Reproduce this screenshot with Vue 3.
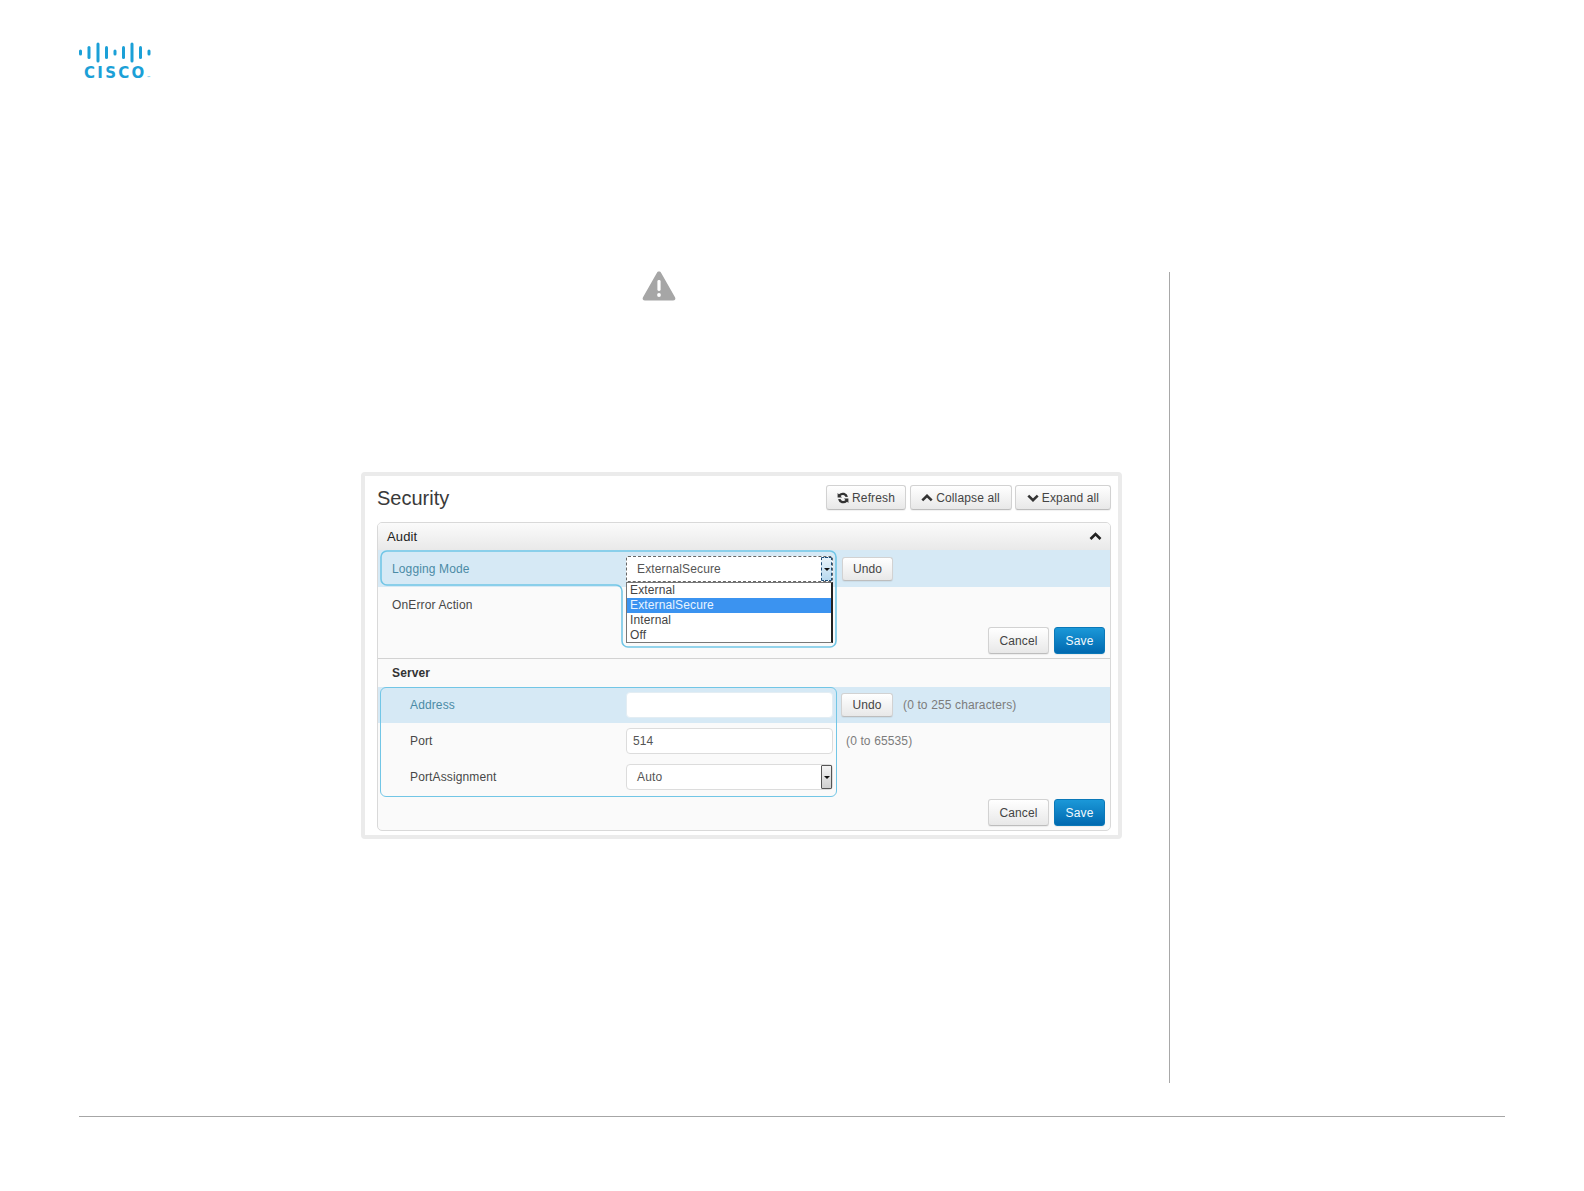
<script setup>
const bars = [
  { x: 1.5, h: 6 }, { x: 10, h: 13 }, { x: 19, h: 20 }, { x: 27.5, h: 13 }, { x: 36, h: 6 },
  { x: 44.5, h: 13 }, { x: 53, h: 20 }, { x: 61.5, h: 13 }, { x: 70, h: 6 }
]
const options = ['External', 'ExternalSecure', 'Internal', 'Off']
</script>

<template>
  <div class="page">
    <header class="brand">
      <svg class="bars" width="72" height="22" viewBox="0 0 72 22">
        <rect v-for="b in bars" :key="b.x" :x="b.x - 1.5" :y="10.5 - b.h / 2" width="3" :height="b.h" rx="1.5" fill="#1ba0d7" />
      </svg>
      <div class="wordmark">CISCO<span class="tm">™</span></div>
    </header>

    <main class="main">
      <section class="content">
        <div class="warning">
          <svg width="34" height="31" viewBox="0 0 34 31">
            <path d="M17 1.5 C18 1.5 18.7 2 19.2 2.9 L33 27.3 C34 29 33 30.5 31 30.5 L3 30.5 C1 30.5 0 29 1 27.3 L14.8 2.9 C15.3 2 16 1.5 17 1.5 Z" fill="#a6a6a6" />
            <rect x="15.4" y="10" width="3.2" height="11" rx="1.4" fill="#fff" />
            <circle cx="17" cy="25" r="1.9" fill="#fff" />
          </svg>
        </div>

        <div class="panel">
          <div class="title-row">
            <h1>Security</h1>
            <div class="toolbar">
              <button class="btn tool refresh">
                <svg width="12" height="12" viewBox="0 0 12 12">
                  <path d="M11 4.8A5.4 5.4 0 0 0 1.9 2.3L.6 1V5.4H5L3.6 4A3 3 0 0 1 8.6 5Z" fill="#333" />
                  <path d="M11 4.8A5.4 5.4 0 0 0 1.9 2.3L.6 1V5.4H5L3.6 4A3 3 0 0 1 8.6 5Z" fill="#333" transform="rotate(180 6 6)" />
                </svg>
                Refresh
              </button>
              <button class="btn tool collapse">
                <svg width="12" height="8" viewBox="0 0 12 8"><path d="M1.3 6.4 6 1.8l4.7 4.6" fill="none" stroke="#333" stroke-width="2.6" /></svg>
                Collapse all
              </button>
              <button class="btn tool expand">
                <svg width="12" height="8" viewBox="0 0 12 8"><path d="M1.3 1.6 6 6.2l4.7-4.6" fill="none" stroke="#333" stroke-width="2.6" /></svg>
                Expand all
              </button>
            </div>
          </div>

          <div class="accordion">
            <div class="acc-head">
              <span>Audit</span>
              <svg width="13" height="9" viewBox="0 0 13 9"><path d="M1.5 7 6.5 2l5 5" fill="none" stroke="#222" stroke-width="2.6" /></svg>
            </div>

            <div class="audit">
              <div class="row active tall">
                <label>Logging Mode</label>
                <div class="select focused">
                  <span>ExternalSecure</span>
                  <i class="arrow"></i>
                </div>
                <button class="btn undo u1">Undo</button>
              </div>
              <div class="row plain">
                <label>OnError Action</label>
              </div>
              <div class="actions a1">
                <button class="btn cancel">Cancel</button>
                <button class="btn save">Save</button>
              </div>

              <svg class="focus-ring" width="460" height="100" viewBox="0 0 460 100">
                <path d="M9 1H452a6 6 0 0 1 6 6V91a6 6 0 0 1-6 6H250a6 6 0 0 1-6-6V41a6 6 0 0 0-6-6H9a6 6 0 0 1-6-6V7a6 6 0 0 1 6-6Z" fill="none" stroke="#72c6e6" stroke-width="1.6" />
              </svg>
              <ul class="listbox">
                <li v-for="o in options" :key="o" :class="{ sel: o === 'ExternalSecure' }">{{ o }}</li>
              </ul>
            </div>

            <div class="server">
              <div class="server-title">Server</div>
              <div class="row active sub">
                <label>Address</label>
                <div class="input"></div>
                <button class="btn undo">Undo</button>
                <span class="hint first">(0 to 255 characters)</span>
              </div>
              <div class="row sub">
                <label>Port</label>
                <div class="input">514</div>
                <span class="hint">(0 to 65535)</span>
              </div>
              <div class="row sub">
                <label>PortAssignment</label>
                <div class="select">
                  <span>Auto</span>
                  <i class="arrow"></i>
                </div>
              </div>
              <div class="actions a2">
                <button class="btn cancel">Cancel</button>
                <button class="btn save">Save</button>
              </div>
              <div class="focus-box"></div>
            </div>
          </div>
        </div>
      </section>
    </main>

    <footer class="foot"></footer>
  </div>
</template>

<style scoped>
.page {
  width: 1584px;
  height: 1191px;
  background: #fff;
  font-family: "Liberation Sans", Arial, sans-serif;
  color: #333;
  overflow: hidden;
  padding-left: 79px;
  padding-top: 42px;
  box-sizing: border-box;
  letter-spacing: .13px;
}
.brand { width: 76px; height: 230px; }
.bars { display: block; }
.wordmark {
  margin: 2px 0 0 5px;
  font: bold 15px/15px "DejaVu Sans", sans-serif;
  letter-spacing: 2.3px;
  color: #1ba0d7;
  white-space: nowrap;
}
.tm { font-size: 4px; font-weight: normal; vertical-align: -1px; letter-spacing: 0; }

.content {
  width: 1090px;
  height: 811px;
  border-right: 1px solid #a8a8a8;
}
.warning { display: flex; height: 200px; padding: 0 0 0 563px; box-sizing: border-box; align-items: flex-start; }
.warning svg { display: block; margin-top: -2px; }

.panel {
  margin-left: 282px;
  width: 761px;
  height: 367px;
  border: 4px solid #ebebeb;
  border-radius: 4px;
  background: #fff;
  padding: 0 7px 0 12px;
  box-sizing: border-box;
}
.title-row {
  display: flex;
  justify-content: space-between;
  align-items: flex-start;
  height: 46px;
  padding-top: 9px;
  box-sizing: border-box;
}
h1 { margin: 1px 0 0; font-size: 20px; font-weight: normal; line-height: 24px; color: #3a3a3a; letter-spacing: 0; }
.toolbar { display: flex; gap: 3.5px; }
.btn {
  font: 12px "Liberation Sans", Arial, sans-serif;
  letter-spacing: .13px;
  color: #444;
  border: 1px solid #d2d2d2;
  border-bottom-color: #bdbdbd;
  border-radius: 3px;
  background: linear-gradient(#fff, #e8e8e8);
  box-shadow: 0 1px 1px rgba(0, 0, 0, .06);
  padding: 0;
  display: inline-flex;
  align-items: center;
  justify-content: center;
  box-sizing: border-box;
}
.tool { height: 25px; gap: 3px; }
.refresh { width: 80px; }
.collapse { width: 102px; }
.expand { width: 96px; }

.accordion {
  width: 734px;
  height: 309px;
  border: 1px solid #d9d9d9;
  border-radius: 5px;
  background: #fafafa;
  box-sizing: border-box;
  overflow: hidden;
}
.acc-head {
  height: 27px;
  background: linear-gradient(#fbfbfb, #e9e9e9);
  display: flex;
  align-items: center;
  justify-content: space-between;
  padding: 0 8px 0 9px;
  font-size: 13px;
  color: #222;
}

.audit { position: relative; height: 108px; border-bottom: 1px solid #d2d2d2; }
.row { display: flex; align-items: center; height: 36px; padding-left: 14px; font-size: 12px; }
.row.tall { height: 37px; }
.row label { width: 234px; flex: none; color: #484848; }
.row.active { background: #d6e9f5; }
.row.active label { color: #4b8ba6; }
.row.sub { padding-left: 32px; }
.row.sub label { width: 216px; }

.select, .input {
  width: 207px;
  height: 26px;
  flex: none;
  box-sizing: border-box;
  background: #fff;
  border: 1px solid #dcdcdc;
  border-radius: 4px;
  font-size: 12px;
  color: #555;
  display: flex;
  align-items: center;
  position: relative;
}
.row.active .input { border-color: #e3edf3; }
.select span { padding-left: 10px; }
.input { padding-left: 6px; }
.arrow {
  position: absolute;
  right: 0;
  top: 0;
  bottom: 0;
  width: 11px;
  box-sizing: border-box;
  border: 1px solid #555;
  border-radius: 1px;
  background: linear-gradient(#f4f4f4, #cfcfcf);
}
.arrow::after {
  content: "";
  position: absolute;
  left: 2px;
  top: 10px;
  border: 3px solid transparent;
  border-top-color: #111;
  border-bottom: 0;
}
.focused { border: 1px dashed #666; border-radius: 2px; }
.focused .arrow { border: 1px dashed #1f4e79; background: linear-gradient(#e8f3fa, #b8d9ef); }

.undo { width: 52px; height: 24px; margin-left: 8px; flex: none; }
.undo.u1 { width: 51px; margin-left: 9px; }
.hint { color: #7c7c7c; font-size: 12px; margin-left: 13px; }
.hint.first { margin-left: 10px; }

.actions { display: flex; justify-content: flex-end; gap: 5px; padding-right: 5px; }
.cancel { width: 61px; height: 27px; }
.save {
  width: 51px;
  height: 27px;
  color: #f2f9fd;
  border-color: #0a78b8;
  background: linear-gradient(#1b98d8, #0069b0);
}
.a1 { position: absolute; right: 0; top: 77px; }
.a2 { margin-top: 4px; }

.focus-ring { position: absolute; left: 0; top: 0; }
.listbox {
  position: absolute;
  left: 248px;
  top: 32px;
  width: 207px;
  height: 61px;
  margin: 0;
  padding: 0;
  list-style: none;
  background: #fff;
  border: 1px solid #777;
  border-right: 2px solid #222;
  box-sizing: border-box;
  font-size: 12px;
  color: #444;
}
.listbox li { height: 15px; line-height: 15px; padding-left: 3px; }
.listbox li.sel { background: #3b93f0; color: #e8f4ff; }

.server { position: relative; }
.server-title {
  height: 28px;
  padding: 7px 0 0 14px;
  box-sizing: border-box;
  font-size: 12px;
  font-weight: bold;
  line-height: 15px;
  color: #333;
}
.focus-box {
  position: absolute;
  left: 2px;
  top: 28px;
  width: 457px;
  height: 110px;
  box-sizing: border-box;
  border: 1.6px solid #72c6e6;
  border-radius: 6px;
}

.foot {
  margin-top: 33px;
  width: 1426px;
  height: 1px;
  background: #a6a6a6;
}
</style>
